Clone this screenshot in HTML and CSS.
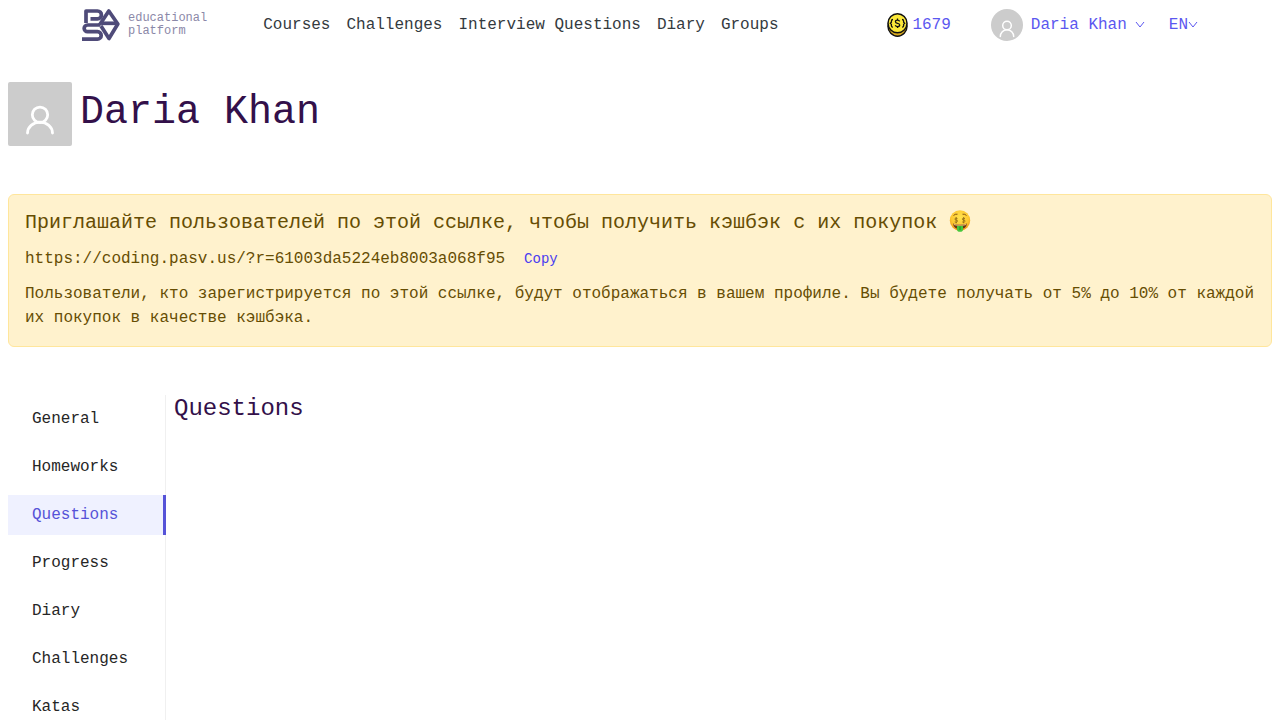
FILE: index.html
```html
<!DOCTYPE html>
<html lang="en">
<head>
<meta charset="utf-8">
<meta name="viewport" content="width=device-width, initial-scale=1">
<title>Daria Khan – Questions</title>
<link rel="stylesheet" href="styles.css">
</head>
<body>
<header class="header">
  <a class="logo" href="#" aria-label="PASV educational platform">
    <svg class="logo-mark" viewBox="0 0 38 32" fill="none" stroke="#4f4b79" stroke-width="3.700" stroke-linejoin="round" aria-hidden="true">
      <path d="M4 14V2h11.500a3.900 3.900 0 0 1 0 7.800H8.500"/>
      <path d="M17.500 16 26.800 2 35.800 15 27 29.500 19 17"/>
      <path d="M20 14.300H35"/>
      <path d="M18 16H5.500a3.300 3.300 0 0 0 0 6.700h10a3.700 3.700 0 0 1 0 7.400H0"/>
    </svg>
    <span class="logo-text">educational<br>platform</span>
  </a>
  <nav class="nav">
    <a href="#">Courses</a>
    <a href="#">Challenges</a>
    <a href="#">Interview Questions</a>
    <a href="#">Diary</a>
    <a href="#">Groups</a>
  </nav>
  <div class="account">
    <a class="coins" href="#">
      <svg class="coin" viewBox="0 0 22 24" aria-hidden="true">
        <ellipse cx="11.500" cy="13.300" rx="9.500" ry="9.900" fill="#d9a91e" stroke="#111" stroke-width="1.500"/>
        <circle cx="11.500" cy="10.300" r="9.500" fill="#fbe83a" stroke="#111" stroke-width="1.500"/>
        <path d="M7 6.500q-1.600 0-1.600 1.500v1.200L4.300 10.300l1.100 1.100v1.300q0 1.500 1.600 1.500M16 6.500q1.600 0 1.600 1.500v1.200l1.100 1.100-1.100 1.100v1.300q0 1.500-1.600 1.500M13.700 8.400Q13 7.100 11.500 7.100q-2.100 0-2.100 1.500t2.100 1.700 2.200 1.700-2.200 1.600q-1.600 0-2.300-1.300M11.500 5.500v1.500M11.500 13.500V15" fill="none" stroke="#111" stroke-width="1.300"/>
      </svg>
      1679
    </a>
    <button class="user" type="button">
      <svg class="avatar-small" viewBox="0 0 32 32" fill="none" stroke="#fff" stroke-width="1.500" stroke-linecap="round" aria-hidden="true">
        <circle cx="16" cy="16.500" r="4.300"/>
        <path d="M9.300 27.500a6.700 6.700 0 0 1 13.400 0"/>
      </svg>
      Daria Khan
      <svg class="chevron" viewBox="0 0 10 10" aria-hidden="true"><path d="m1 2 4 5 4-5"/></svg>
    </button>
    <button class="language" type="button">EN<svg class="chevron" viewBox="0 0 10 10" aria-hidden="true"><path d="m1 2 4 5 4-5"/></svg></button>
  </div>
</header>

<main class="page">
  <section class="profile">
    <svg class="avatar" viewBox="0 0 64 64" fill="none" stroke="#fff" stroke-width="2.800" stroke-linecap="round" aria-hidden="true">
      <circle cx="32" cy="32.800" r="7.700"/>
      <path d="M19.500 51a12.500 10.800 0 0 1 25 0"/>
    </svg>
    <h1 class="name">Daria Khan</h1>
  </section>

  <section class="invite">
    <h2 class="invite-title">Приглашайте пользователей по этой ссылке, чтобы получить кэшбэк с их покупок
      <svg class="emoji" viewBox="0 0 22 22" role="img" aria-label="money-mouth face">
        <defs>
          <radialGradient id="face" cx=".5" cy=".35" r=".65">
            <stop offset="0" stop-color="#ffe34f"/>
            <stop offset=".65" stop-color="#fdc831"/>
            <stop offset="1" stop-color="#ef9619"/>
          </radialGradient>
        </defs>
        <circle cx="11" cy="10.500" r="10.200" fill="url(#face)"/>
        <path d="M4.500 5.500Q6 3.800 8.500 4.200M13.500 4.200q2.500-.4 4 1.300" fill="none" stroke="#865511"/>
        <path d="M4 13.500q7 2.500 14 0-.7 5.500-7 5.500t-7-5.500" fill="#693512"/>
        <path d="M4.500 13.700q6.500 2 13 0-.2 1-1 1.500-5.500 1.200-11 0-.7-.5-1-1.500" fill="#e9b56c"/>
        <path d="M8 15.800q3 .6 6 0v3.700q0 2.300-3 2.300t-3-2.300z" fill="#45c83d"/>
        <path d="M11 16.500V20" stroke="#238728"/>
        <path d="M8.500 8.600Q6 7.300 6 8.900t1.300 1.200 1.100 1.300-2.700.5M7.200 7v6.300M16 8.600q-2.500-1.300-2.500.3t1.300 1.200 1.100 1.300-2.700.5M14.700 7v6.300" fill="none" stroke="#8b6714" stroke-width=".8"/>
      </svg>
    </h2>
    <div class="invite-link">
      <span>https://coding.pasv.us/?r=61003da5224eb8003a068f95</span>
      <button class="copy" type="button">Copy</button>
    </div>
    <p class="invite-note">Пользователи, кто зарегистрируется по этой ссылке, будут отображаться в вашем профиле. Вы будете получать от 5% до 10% от каждой их покупок в качестве кэшбэка.</p>
  </section>

  <div class="content">
    <nav class="menu" aria-label="Profile">
      <a href="#">General</a>
      <a href="#">Homeworks</a>
      <a class="active" href="#" aria-current="page">Questions</a>
      <a href="#">Progress</a>
      <a href="#">Diary</a>
      <a href="#">Challenges</a>
      <a href="#">Katas</a>
    </nav>
    <section class="panel">
      <h2 class="panel-title">Questions</h2>
    </section>
  </div>
</main>
</body>
</html>
```

FILE: styles.css
```css
* {
  box-sizing: border-box;
}

body {
  margin: 0;
  background: #fff;
  color: #212529;
  font: 16px/24px "Liberation Mono", monospace;
}

a {
  color: inherit;
  text-decoration: none;
}

button {
  padding: 0;
  border: 0;
  background: none;
  font: inherit;
  cursor: pointer;
}

h1,
h2,
p {
  margin: 0;
}

svg {
  flex: none;
}

.header {
  display: flex;
  align-items: center;
  max-width: 1140px;
  min-height: 50px;
  margin: 0 auto;
  padding: 0 12px;
}

.logo {
  display: flex;
  align-items: center;
  gap: 8px;
  margin-right: 56px;
  color: #8b88a8;
  font-size: 12px;
  line-height: 13px;
}

.logo-mark {
  width: 38px;
  height: 32px;
}

.nav {
  display: flex;
  gap: 16px;
  color: #343a40;
}

.account {
  display: flex;
  align-items: center;
  margin-left: auto;
  color: #5b57f0;
}

.account button {
  color: inherit;
}

.coins,
.user,
.language {
  display: flex;
  align-items: center;
}

.coins {
  gap: 4px;
  margin-right: 40px;
}

.coin {
  width: 22px;
  height: 24px;
}

.user {
  gap: 8px;
  margin-right: 24px;
}

.avatar-small {
  width: 32px;
  height: 32px;
  border-radius: 50%;
  background: #ccc;
}

.chevron {
  width: 10px;
  height: 10px;
  fill: none;
  stroke: currentColor;
}

.page {
  padding: 32px 8px 0;
}

.profile {
  display: flex;
  align-items: flex-start;
  gap: 8px;
  margin-bottom: 48px;
}

.avatar {
  width: 64px;
  height: 64px;
  border-radius: 2px;
  background: #ccc;
}

.name {
  color: #33104a;
  font-size: 40px;
  font-weight: 500;
  line-height: 62px;
}

.invite {
  margin-bottom: 48px;
  padding: 16px;
  border: 1px solid #ffe69c;
  border-radius: 6px;
  background: #fff2cd;
  color: #664d03;
}

.invite-title {
  margin-bottom: 8px;
  font-size: 20px;
  font-weight: 500;
  line-height: 24px;
}

.emoji {
  width: 22px;
  height: 22px;
  margin-top: -4px;
  vertical-align: -4px;
}

.invite-link {
  display: flex;
  align-items: center;
  gap: 19px;
  min-height: 31px;
  margin-bottom: 8px;
}

.copy {
  color: #4a3df0;
  font-size: 14px;
}

.content {
  display: flex;
  gap: 8px;
}

.menu {
  flex: 0 0 158px;
  padding: 4px 0;
  border-right: 1px solid #f0f0f0;
  color: #262626;
}

.menu a {
  display: block;
  margin-bottom: 8px;
  padding: 0 24px;
  line-height: 40px;
}

.menu .active {
  margin-right: -1px;
  border-right: 3px solid #5653d8;
  background: #eff1ff;
  color: #5653d8;
}

.panel {
  flex: 1;
}

.panel-title {
  color: #33104a;
  font-size: 24px;
  font-weight: 500;
  line-height: 28px;
}
```
